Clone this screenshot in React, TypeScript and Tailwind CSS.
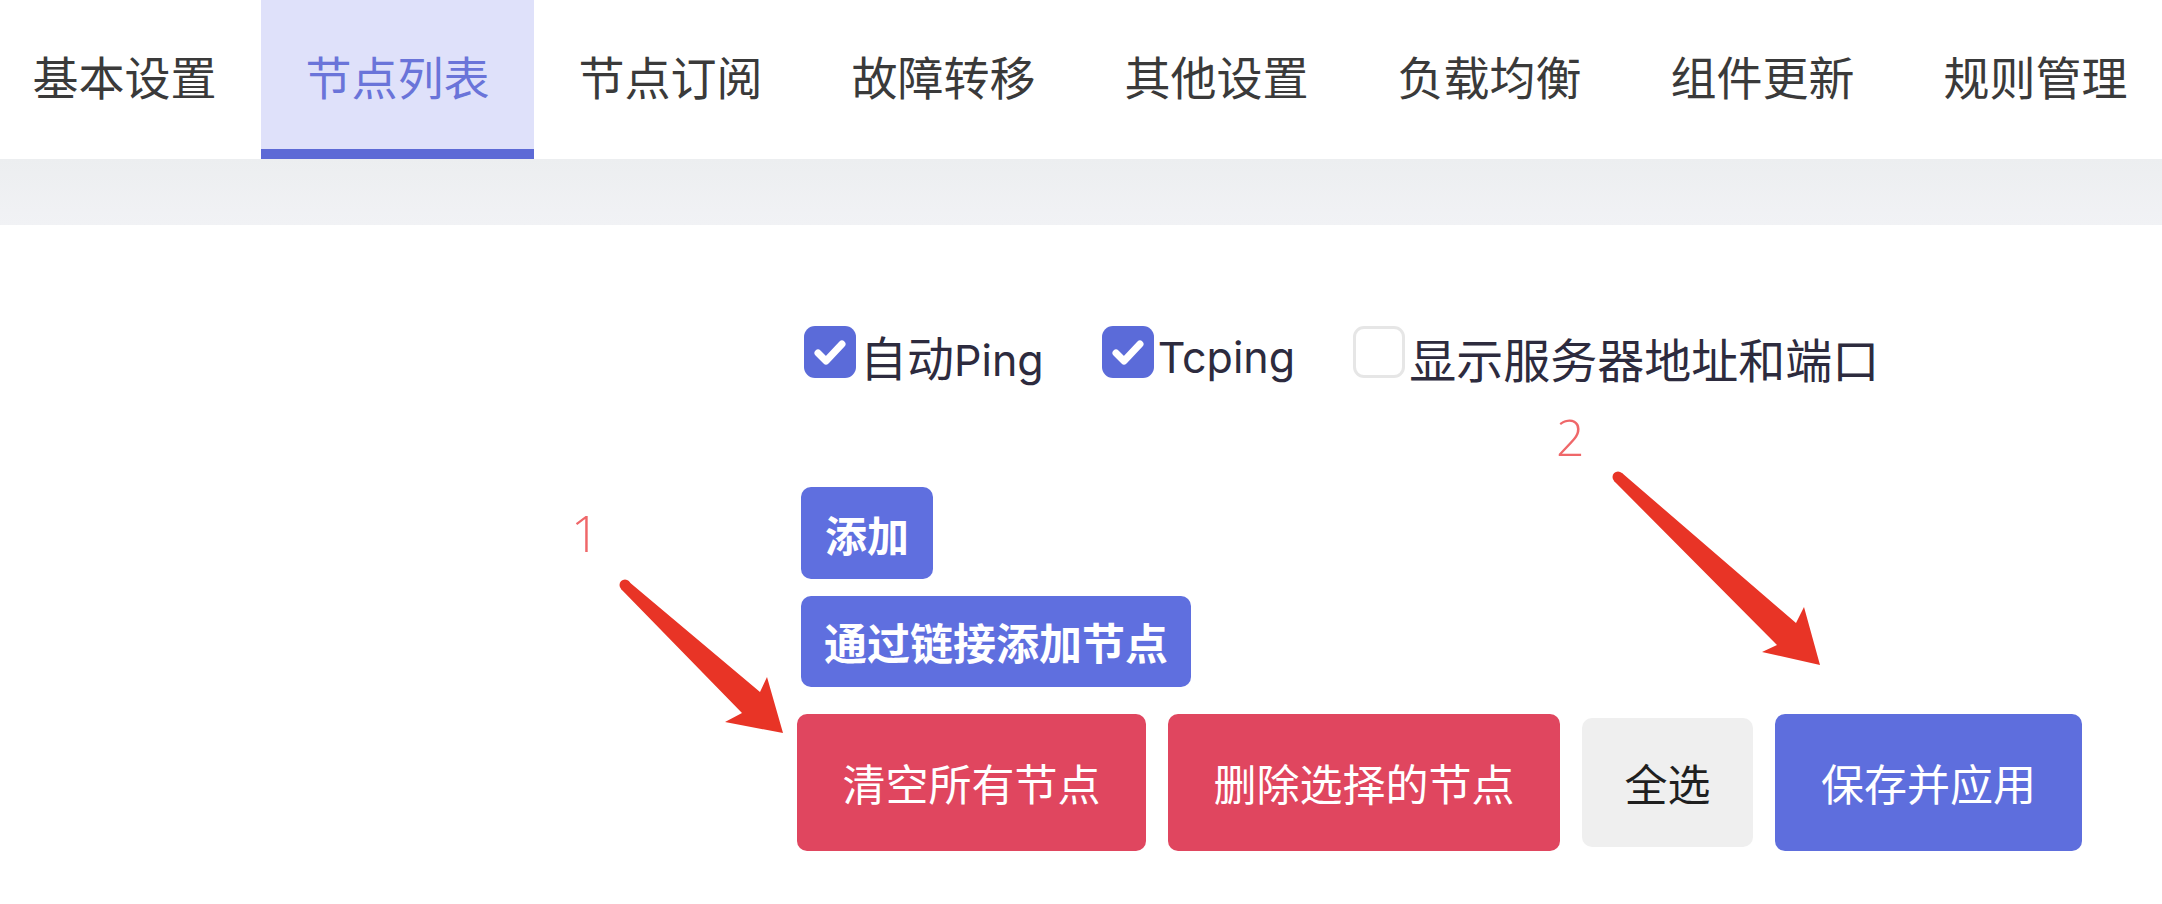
import { Fragment } from "react";

const tabs = [
  "基本设置",
  "节点列表",
  "节点订阅",
  "故障转移",
  "其他设置",
  "负载均衡",
  "组件更新",
  "规则管理",
];

const options = [
  { cjk: "自动", latin: "Ping", checked: true },
  { cjk: "", latin: "Tcping", checked: true },
  { cjk: "显示服务器地址和端口", latin: "", checked: false },
];

function Checkbox({ checked }: { checked: boolean }) {
  if (!checked) {
    return (
      <span className="block w-[52px] h-[52px] rounded-[11px] border-[3px] border-[#e6e6e6] bg-white shrink-0" />
    );
  }
  return (
    <span className="flex items-center justify-center w-[52px] h-[52px] rounded-[11px] bg-[#5b6bd9] shrink-0">
      <svg width="52" height="52" viewBox="0 0 52 52">
        <path
          d="M14 27 L22 35 L38 18"
          fill="none"
          stroke="#fff"
          strokeWidth="7"
          strokeLinecap="round"
          strokeLinejoin="round"
        />
      </svg>
    </span>
  );
}

export default function App() {
  return (
    <div className="relative min-h-[904px] w-full overflow-hidden bg-white font-['Noto_Sans_CJK_SC',sans-serif]">
      {/* tab bar */}
      <div className="flex -ml-[12px] h-[159px]">
        {tabs.map((tab, i) => {
          const active = i === 1;
          return (
            <div
              key={tab}
              className={
                active
                  ? "flex flex-col w-[273px] shrink-0 bg-[#dfe1fa]"
                  : "flex flex-col w-[273px] shrink-0"
              }
            >
              <div
                className={
                  active
                    ? "flex-1 flex items-center justify-center pt-[2px] text-[46px] text-[#6a74d9]"
                    : "flex-1 flex items-center justify-center pt-[2px] text-[46px] text-[#3a3a3a]"
                }
              >
                {tab}
              </div>
              <div className={active ? "h-[10px] bg-[#5d6ad6]" : "h-[10px]"} />
            </div>
          );
        })}
      </div>
      <div className="h-[66px] bg-gradient-to-b from-[#eceef0] to-[#f1f2f5]" />

      {/* form */}
      <div className="flex">
        <div className="w-[797px] shrink-0" />
        <div className="flex flex-col items-start pt-[101px]">
          <div className="flex items-center h-[52px] ml-[7px]">
            {options.map((o) => (
              <Fragment key={o.cjk + o.latin}>
                <label className="flex items-center gap-[4px] mr-[58px]">
                  <Checkbox checked={o.checked} />
                  <span className="flex items-baseline leading-none pt-[10px] text-[#2d2b3e]">
                    {o.cjk && <span className="text-[47px]">{o.cjk}</span>}
                    {o.latin && (
                      <span className="text-[43px] font-['Inter',sans-serif]">
                        {o.latin}
                      </span>
                    )}
                  </span>
                </label>
              </Fragment>
            ))}
          </div>

          <button className="mt-[109px] ml-[4px] h-[92px] px-[24px] rounded-[10px] bg-[#5f6fdf] text-white text-[42px] font-bold">
            添加
          </button>
          <button className="mt-[17px] ml-[4px] h-[91px] px-[23px] rounded-[10px] bg-[#5f6fdf] text-white text-[43px] font-bold">
            通过链接添加节点
          </button>

          <div className="mt-[27px] flex items-center gap-[22px] text-[43px]">
            <button className="h-[137px] w-[349px] rounded-[10px] bg-[#e0465f] text-white">
              清空所有节点
            </button>
            <button className="h-[137px] w-[392px] rounded-[10px] bg-[#e0465f] text-white">
              删除选择的节点
            </button>
            <button className="h-[129px] w-[171px] rounded-[10px] bg-[#efefef] text-[#1f1f1f]">
              全选
            </button>
            <button className="h-[137px] w-[307px] rounded-[10px] bg-[#5e6edd] text-white">
              保存并应用
            </button>
          </div>
        </div>
      </div>

      {/* annotations */}
      <span className="absolute left-[571px] top-[508px] text-[50px] leading-none font-light text-[#ef6769] font-['Open_Sans',sans-serif]">
        1
      </span>
      <span className="absolute left-[1556px] top-[412px] text-[50px] leading-none font-light text-[#ef6769] font-['Open_Sans',sans-serif]">
        2
      </span>
      <svg
        className="absolute left-0 top-0 pointer-events-none"
        width="2162"
        height="904"
        viewBox="0 0 2162 904"
      >
        <g fill="#e83426">
          <circle cx="625" cy="585" r="5.5" />
          <polygon points="628,581 760,692 767,677 783,733 725,722 742,713 621,589" />
          <circle cx="1618" cy="477" r="5.5" />
          <polygon points="1622,473 1796,623 1804,607 1820,665 1762,652 1777,645 1614,481" />
        </g>
      </svg>
    </div>
  );
}
